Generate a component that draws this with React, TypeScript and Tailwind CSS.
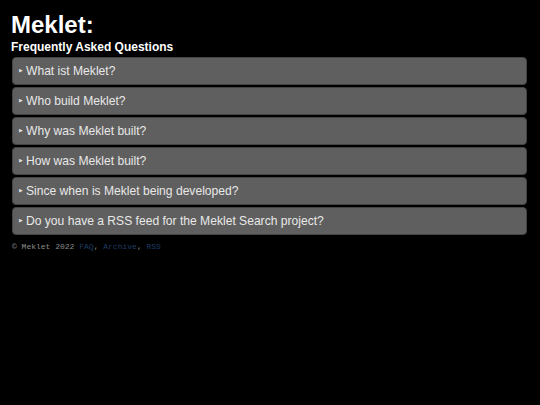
const questions = [
  'What ist Meklet?',
  'Who build Meklet?',
  'Why was Meklet built?',
  'How was Meklet built?',
  'Since when is Meklet being developed?',
  'Do you have a RSS feed for the Meklet Search project?',
];

const App = () => {
  return (
    <div className="min-h-[405px] bg-black px-[11px] pt-[12px] font-['Liberation_Sans',Arial,sans-serif] text-white">
      <h1 className="text-[24px] font-bold leading-[26px]">Meklet:</h1>
      <h2 className="mt-[2px] text-[12px] font-bold leading-[14px]">Frequently Asked Questions</h2>
      <div className="mt-[3px] mr-[2px] ml-[1px] flex flex-col gap-[2px]">
        {questions.map((q) => (
          <details key={q} className="rounded-[4px] border border-[#444] bg-[#5f5f5f]">
            <summary className="flex h-[26px] cursor-pointer list-none items-center pl-[6px] text-[12.1px] text-[#e8e8e8]">
              <span className="mr-[3px] text-[5px] text-[#ddd]">&#9654;</span>
              {q}
            </summary>
          </details>
        ))}
      </div>
      <p className="mt-[6px] ml-[1px] font-['Liberation_Mono','Courier_New',monospace] text-[8px] text-[#8a8a8a]">
        © Meklet 2022{' '}
        <a href="#" className="text-[#1f3d66]">FAQ</a>,{' '}
        <a href="#" className="text-[#1f3d66]">Archive</a>,{' '}
        <a href="#" className="text-[#1f3d66]">RSS</a>
      </p>
    </div>
  );
};

export default App;
